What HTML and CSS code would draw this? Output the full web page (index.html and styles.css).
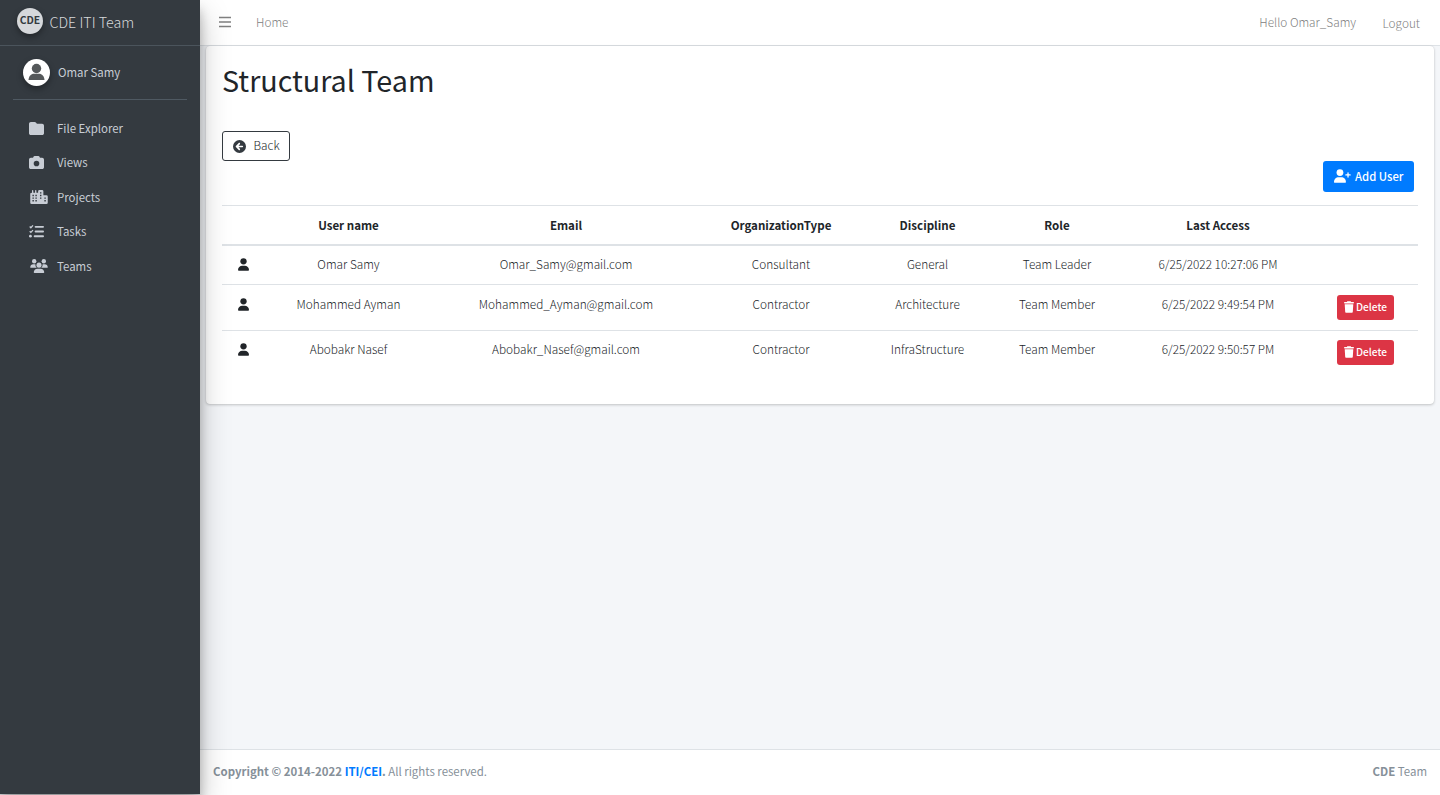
FILE: index.html
```html
<!DOCTYPE html>
<html lang="en">
<head>
<meta charset="utf-8">
<title>Structural Team</title>
<link rel="stylesheet" href="styles.css">
</head>
<body>
<svg class="sprite" aria-hidden="true">
  <symbol id="user" viewBox="0 0 448 512"><circle cx="224" cy="128" r="128"/><path d="M274.700 304H173.300C77.600 304 0 381.600 0 477.300 0 496.500 15.500 512 34.700 512h378.600c19.200 0 34.700-15.500 34.700-34.700C448 381.600 370.400 304 274.700 304z"/></symbol>
  <symbol id="trash" viewBox="0 0 448 512"><path d="M135.200 17.700L128 32H32C14.300 32 0 46.300 0 64s14.300 32 32 32h384c17.700 0 32-14.300 32-32s-14.300-32-32-32h-96l-7.200-14.300C307.400 6.800 296.300 0 284.200 0H163.800c-12.100 0-23.200 6.800-28.600 17.700zM416 128H32l21.200 339c1.600 25.300 22.600 45 47.900 45h245.800c25.300 0 46.300-19.700 47.900-45L416 128z"/></symbol>
</svg>
<div class="app">
  <aside class="sidebar">
    <div class="brand"><span class="logo">CDE</span><span class="brand-name">CDE ITI Team</span></div>
    <div class="profile">
      <span class="avatar"><svg viewBox="0 0 27 27"><circle cx="13.500" cy="9.500" r="4.700"/><path d="M5.500 21c.2-4 2.600-6.300 5.500-6.300h5c2.900 0 5.300 2.300 5.500 6.300z"/></svg></span>
      <span>Omar Samy</span>
    </div>
    <nav class="menu">
      <a><svg class="sq" viewBox="0 0 512 512"><path d="M64 480h384c35.300 0 64-28.700 64-64V160c0-35.300-28.700-64-64-64H288c-10 0-19.600-4.700-25.600-12.800l-19.200-25.600C231 41.500 212 32 192 32H64C28.700 32 0 60.700 0 96v320c0 35.300 28.700 64 64 64z"/></svg><span>File Explorer</span></a>
      <a class="raised"><svg class="sq" viewBox="0 0 512 512"><path fill-rule="evenodd" d="M149 64.800L138.700 96H64c-35.300 0-64 28.700-64 64v256c0 35.300 28.700 64 64 64h384c35.300 0 64-28.700 64-64V160c0-35.300-28.700-64-64-64h-74.700L363 64.800C356.400 45.200 338 32 317.400 32H194.600c-20.700 0-39 13.200-45.600 32.800zM256 192a96 96 0 1 1 0 192 96 96 0 1 1 0-192z"/></svg><span>Views</span></a>
      <a><svg class="wide" viewBox="0 0 640 512"><path fill-rule="evenodd" d="M64 24a24 24 0 0 1 48 0v72h64V24a24 24 0 0 1 48 0v72h64V48a48 48 0 0 1 48-48h96a48 48 0 0 1 48 48v144h112a48 48 0 0 1 48 48v224a48 48 0 0 1-48 48H48a48 48 0 0 1-48-48V144a48 48 0 0 1 16-36l48-12zM80 176h52v52H80zm108 0h52v52h-52zM80 272h52v52H80zm108 0h52v52h-52zM80 368h52v52H80zm108 0h52v52h-52zM356 80h52v52h-52zm0 96h52v52h-52zm0 96h52v52h-52zm160 0h52v52h-52zm0 96h52v52h-52z"/></svg><span>Projects</span></a>
      <a class="raised"><svg class="sq" viewBox="0 0 512 512"><path class="ln" d="M24 88l40 40 72-80M24 248l40 40 72-80"/><path class="bar" d="M224 96h256M224 256h256M192 416h288"/><circle cx="48" cy="416" r="48"/></svg><span>Tasks</span></a>
      <a><svg class="wide" viewBox="0 0 640 512"><circle cx="144" cy="80" r="80"/><circle cx="496" cy="80" r="80"/><circle cx="320" cy="224" r="92"/><path d="M0 298.700C0 239.800 47.800 192 106.700 192h42.600c16 0 31 3.500 44.600 9.700-12 49 5 90 45.500 118.300H21.300C9.600 320 0 310.400 0 298.700zM400.600 320c40-29 58-70 45.500-118.300 13.700-6.200 28.700-9.700 44.600-9.700h42.600C592.200 192 640 239.800 640 298.700c0 11.700-9.600 21.300-21.300 21.300zM128 485.300C128 411.700 187.700 352 261.300 352h117.400C452.300 352 512 411.700 512 485.300c0 14.700-12 26.700-26.700 26.700H154.700c-14.700 0-26.700-12-26.700-26.700z"/></svg><span>Teams</span></a>
    </nav>
  </aside>
  <div class="page">
    <header class="topbar">
      <svg class="bars" viewBox="0 0 12 12"><path d="M0 1.500h12M0 6h12M0 10.500h12"/></svg>
      <a class="home">Home</a>
      <span class="hello">Hello Omar_Samy</span>
      <a class="logout">Logout</a>
    </header>
    <main class="content">
      <section class="card">
        <h1>Structural Team</h1>
        <a class="btn back"><svg viewBox="0 0 512 512"><path fill-rule="evenodd" d="M512 256A256 256 0 1 0 0 256a256 256 0 1 0 512 0zM225 121c14-14 35-14 47 0s12 32 0 46l-57 57h153c18 0 32 14 32 32s-14 32-32 32H215l57 57c12 14 12 32 0 46s-33 14-47 0L113 279c-12-13-12-33 0-46z"/></svg><span>Back</span></a>
        <div class="actions"><a class="btn add"><svg viewBox="0 0 640 512"><circle cx="224" cy="128" r="128"/><path d="M274.700 304H173.300C77.600 304 0 381.600 0 477.300 0 496.500 15.500 512 34.700 512h378.600c19.200 0 34.700-15.500 34.700-34.700C448 381.600 370.400 304 274.700 304z"/><path class="plus" d="M528 136v160M448 216h160"/></svg><span>Add User</span></a></div>
        <table>
          <colgroup><col class="c-icon"><col class="c-name"><col class="c-mail"><col class="c-org"><col class="c-disc"><col class="c-role"><col class="c-last"><col class="c-act"></colgroup>
          <thead><tr><th></th><th>User name</th><th>Email</th><th>OrganizationType</th><th>Discipline</th><th>Role</th><th>Last Access</th><th></th></tr></thead>
          <tbody>
            <tr class="first"><td><svg class="person"><use href="#user"/></svg></td><td>Omar Samy</td><td>Omar_Samy@gmail.com</td><td>Consultant</td><td>General</td><td>Team Leader</td><td>6/25/2022 10:27:06 PM</td><td></td></tr>
            <tr><td><svg class="person"><use href="#user"/></svg></td><td>Mohammed Ayman</td><td>Mohammed_Ayman@gmail.com</td><td>Contractor</td><td>Architecture</td><td>Team Member</td><td>6/25/2022 9:49:54 PM</td><td><a class="btn delete"><svg><use href="#trash"/></svg><span>Delete</span></a></td></tr>
            <tr class="last"><td><svg class="person"><use href="#user"/></svg></td><td>Abobakr Nasef</td><td>Abobakr_Nasef@gmail.com</td><td>Contractor</td><td>InfraStructure</td><td>Team Member</td><td>6/25/2022 9:50:57 PM</td><td><a class="btn delete"><svg><use href="#trash"/></svg><span>Delete</span></a></td></tr>
          </tbody>
        </table>
      </section>
    </main>
    <footer class="footer"><span><b>Copyright © 2014-2022 <a>ITI/CEI</a>.</b> All rights reserved.</span><span><b>CDE</b> Team</span></footer>
  </div>
</div>
</body>
</html>
```

FILE: styles.css
```css
* { box-sizing: border-box; }
body { margin: 0; font-family: "Noto Sans CJK SC", "Noto Sans", sans-serif; font-size: 11.800px; line-height: 20px; color: #212529; background: #f4f6f9; }
svg { display: block; fill: currentColor; flex: none; }
.sprite { position: absolute; width: 0; height: 0; }
.app { display: flex; height: 795px; overflow: hidden; }

.sidebar { width: 200px; height: 794px; background: #343a40; color: #c8cdd5; font-size: 11.450px; font-weight: 400; box-shadow: 0 14px 28px rgba(0,0,0,.25), 0 10px 10px rgba(0,0,0,.22); z-index: 2; }
.brand { display: flex; align-items: center; height: 46px; padding: 0 0 3px 17px; border-bottom: 1px solid #4b545c; }
.logo { width: 26px; height: 26px; border-radius: 50%; background: #d6d8db; color: #343a40; font-size: 10.300px; font-weight: 700; line-height: 24px; text-align: center; box-shadow: 0 3px 6px rgba(0,0,0,.35); }
.brand-name { margin: 1px 0 0 6.500px; font-size: 14.300px; font-weight: 300; color: #d6d8da; }
.profile { display: flex; align-items: center; height: 54px; margin: 0 13px; padding: 0 0 1px 10px; border-bottom: 1px solid #4f5962; }
.avatar { width: 27px; height: 27px; margin-right: 8px; border-radius: 50%; background: #fff; color: #55585a; box-shadow: 0 3px 6px rgba(0,0,0,.35); }
.avatar svg { width: 27px; height: 27px; }
.menu { display: flex; flex-direction: column; padding-top: 11px; }
.menu a { display: flex; align-items: center; height: 34.500px; padding-left: 29px; }
.menu .raised { padding-bottom: 1.500px; }
.menu span { width: 130px; }
.menu .sq { width: 15px; height: 15px; margin: 0 13px 0 0; }
.menu .wide { width: 18px; height: 14px; margin: 0 9px 0 1px; }
.ln { fill: none; stroke: currentColor; stroke-width: 44; }
.bar { fill: none; stroke: currentColor; stroke-width: 64; stroke-linecap: round; }

.page { flex: 1; display: flex; flex-direction: column; }
.topbar { display: flex; align-items: center; height: 46px; padding: 0 20px 1px 19px; background: #fff; border-bottom: 1px solid #dee2e6; color: #808080; font-weight: 300; }
.bars { width: 12px; height: 12px; stroke: #808080; stroke-width: 1.300; }
.home { margin-left: 25px; }
.hello { margin-left: auto; }
.logout { margin: 2px 0 0 26.500px; }
.content { flex: 1; padding: 0 6px; }
.card { height: 358px; padding: 15px 16px 16px; background: #fff; border-radius: 4px; box-shadow: 0 0 1px rgba(0,0,0,.13), 0 1px 3px rgba(0,0,0,.2); }
h1 { margin: 0 0 32px; font-size: 28.700px; line-height: 38px; font-weight: 400; }
.btn { display: inline-flex; align-items: center; border-radius: 3px; }
.back { width: 68px; height: 30px; padding-left: 10px; border: 1px solid #343a40; font-weight: 300; vertical-align: top; }
.back span { margin-bottom: 2px; }
.back svg { width: 13px; height: 13px; margin-right: 7.500px; color: #343a40; }
.actions { display: flex; justify-content: flex-end; padding-right: 4px; }
.add { width: 91px; height: 31px; padding: 0 0 1px 11px; background: #007bff; color: #fff; font-size: 11.300px; font-weight: 500; }
.add svg { width: 17px; height: 14px; margin-right: 4px; }
.plus { fill: none; stroke: currentColor; stroke-width: 48; stroke-linecap: round; }

table { width: 1196px; margin-top: 13px; table-layout: fixed; border-collapse: separate; border-spacing: 0; text-align: center; }
.c-icon { width: 43px; } .c-name { width: 167px; } .c-mail { width: 268px; } .c-org { width: 162px; }
.c-disc { width: 131px; } .c-role { width: 128px; } .c-last { width: 194px; } .c-act { width: 103px; }
th { height: 41px; padding: 0; border-top: 1px solid #dee2e6; border-bottom: 2px solid #dee2e6; font-size: 11.550px; font-weight: 700; }
td { height: 46px; padding: 9px 0 0; border-top: 1px solid #dee2e6; vertical-align: top; font-weight: 300; white-space: nowrap; }
.first td { height: 38px; padding-top: 8px; border-top: 0; }
.last td { height: 45px; padding-top: 8px; }
.person { width: 11px; height: 13px; margin: 4px auto 0; }
.delete { width: 57px; height: 25px; margin: 1px 2px 0 0; padding: 0 0 1px 7px; background: #dc3545; color: #fff; font-size: 10.100px; font-weight: 500; vertical-align: top; }
.delete svg { width: 10px; height: 12px; margin-right: 2px; }

.footer { display: flex; justify-content: space-between; align-items: center; height: 46px; padding: 0 13px 3px; background: #fff; border-top: 1px solid #dee2e6; color: #869099; font-size: 11.450px; }
.footer a { color: #007bff; }
```
